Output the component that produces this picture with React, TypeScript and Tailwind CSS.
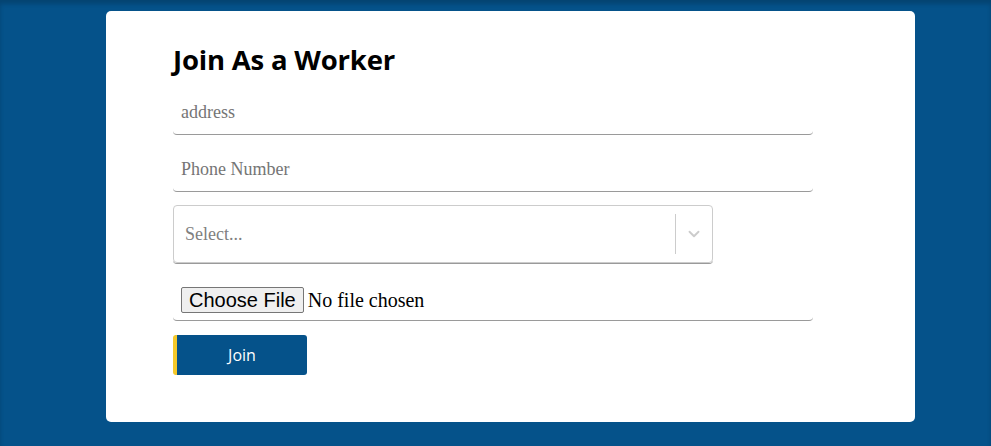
import { ChevronDown } from "lucide-react"

export default function App() {
  return (
    <div className="min-h-[446px] bg-[#05528a] shadow-[inset_0_4px_4px_rgba(0,0,0,0.18)] pt-[11px] pb-6">
      <div className="ml-[106px] w-[809px] h-[411px] bg-white rounded-[5px] pl-[67px] pt-[31px]">
        <h1 className="font-['Open_Sans',sans-serif] font-bold text-[27.5px] leading-[36px] text-black tracking-[-0.2px]">
          Join As a Worker
        </h1>

        <form className="mt-[13px] w-[640px] font-['Liberation_Serif',serif]">
          {/* address */}
          <input
            type="text"
            placeholder="address"
            className="block w-full h-[44px] px-2 text-[18px] text-black placeholder:text-[#757575] border-b border-[#9a9a9a] rounded-[4px] outline-none"
          />

          {/* phone */}
          <input
            type="text"
            placeholder="Phone Number"
            className="block w-full h-[44px] mt-[13px] px-2 text-[18px] text-black placeholder:text-[#757575] border-b border-[#9a9a9a] rounded-[4px] outline-none"
          />

          {/* select */}
          <div className="mt-[13px] w-[540px] border-b border-[#9a9a9a] rounded-[4px]">
            <div className="flex items-center h-[58px] border border-[#cccccc] rounded-[4px] bg-white">
              <div className="flex-1 pl-[11px] text-[18px] text-[#808080]">Select...</div>
              <div className="flex items-center self-stretch py-2">
                <span className="w-px h-full bg-[#cccccc]" />
                <div className="w-[36px] flex items-center justify-center text-[#cccccc]">
                  <ChevronDown size={18} strokeWidth={2.5} />
                </div>
              </div>
            </div>
          </div>

          {/* file */}
          <div className="mt-[21px] border-b border-[#9a9a9a] rounded-[4px] pl-2 pb-[5px]">
            <input
              type="file"
              className="text-[20px] text-black file:font-['Liberation_Sans',sans-serif] file:text-[20px] file:leading-[22px] file:px-[7px] file:py-[1px] file:mr-[4px] file:bg-[#efefef] file:border file:border-[#767676] file:rounded-[2px] file:text-black"
            />
          </div>

          <button
            type="button"
            className="mt-[14px] block w-[134px] h-[40px] bg-[#05528a] border-l-4 border-[#f5c82a] rounded-[3px] text-white text-[16px] font-['Open_Sans',sans-serif]"
          >
            Join
          </button>
        </form>
      </div>
    </div>
  )
}
